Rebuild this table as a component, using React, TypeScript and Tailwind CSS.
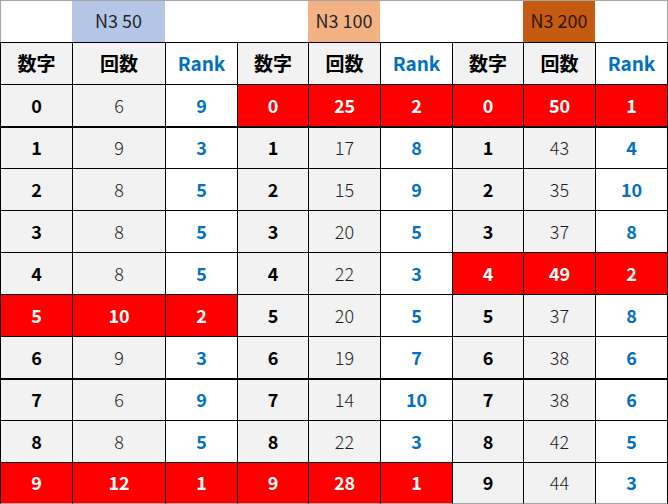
import React from 'react';

type Group = {
  label: string;
  labelClass: string;
  counts: number[];
  ranks: number[];
  red: number[];
};

const groups: Group[] = [
  {
    label: 'N3 50',
    labelClass: 'bg-[#b4c7e7] text-[#262626]',
    counts: [6, 9, 8, 8, 8, 10, 9, 6, 8, 12],
    ranks: [9, 3, 5, 5, 5, 2, 3, 9, 5, 1],
    red: [5, 9],
  },
  {
    label: 'N3 100',
    labelClass: 'bg-[#f4b183] text-[#262626]',
    counts: [25, 17, 15, 20, 22, 20, 19, 14, 22, 28],
    ranks: [2, 8, 9, 5, 3, 5, 7, 10, 3, 1],
    red: [0, 9],
  },
  {
    label: 'N3 200',
    labelClass: 'bg-[#c55a11] text-[#2e1404]',
    counts: [50, 43, 35, 37, 49, 37, 38, 38, 42, 44],
    ranks: [1, 4, 10, 8, 2, 8, 6, 6, 5, 3],
    red: [0, 4],
  },
];

const font = { fontFamily: '"Noto Sans CJK JP", "Noto Sans", sans-serif' };

const Cell = ({
  children,
  className = '',
  thick = false,
}: {
  children?: React.ReactNode;
  className?: string;
  thick?: boolean;
}) => (
  <div
    className={`h-[42px] pb-[2px] flex items-center justify-center border-l border-black leading-none ${
      thick ? 'border-t-2' : 'border-t'
    } ${className}`}
  >
    {children}
  </div>
);

export default function App() {
  const rows = Array.from({ length: 10 }, (_, i) => i);

  return (
    <div className="w-[668px] h-[504px] bg-white overflow-hidden" style={font}>
      <div className="grid grid-cols-[72px_93px_72px_71px_72px_72px_71px_72px_73px] border-t border-[#a6a6a6]">
        {/* Title row */}
        {groups.map((g, gi) => (
          <React.Fragment key={g.label}>
            <div className={`h-[41px] ${gi === 0 ? 'border-l border-[#a6a6a6]' : ''}`} />
            <div className={`h-[41px] pb-[2px] flex items-center justify-center text-[18px] ${g.labelClass}`}>
              {g.label}
            </div>
            <div className={`h-[41px] ${gi === 2 ? 'border-r border-[#a6a6a6]' : ''}`} />
          </React.Fragment>
        ))}

        {/* Column headers */}
        {groups.map((g, gi) => (
          <React.Fragment key={`h-${g.label}`}>
            <Cell className="bg-[#f2f2f2] font-bold text-black text-[19px]">数字</Cell>
            <Cell className="bg-[#f2f2f2] font-bold text-black text-[19px]">回数</Cell>
            <Cell className={`bg-white font-bold text-[#0070c0] text-[19px] ${gi === 2 ? 'border-r' : ''}`}>
              Rank
            </Cell>
          </React.Fragment>
        ))}

        {/* Data rows */}
        {rows.map((r) =>
          groups.map((g, gi) => {
            const red = g.red.includes(r);
            const thick = r === 1 || r === 7;
            const last = gi === 2;
            const bottom = r === 9 ? 'border-b border-b-[#a6a6a6]' : '';
            if (red) {
              return (
                <React.Fragment key={`${r}-${gi}`}>
                  <Cell thick={thick} className={`bg-[#ff0000] border-[#ff0000] text-white font-bold text-[18px] ${bottom}`}>
                    {r}
                  </Cell>
                  <Cell thick={thick} className={`bg-[#ff0000] border-[#ff0000] text-white font-bold text-[18px] ${bottom}`}>
                    {g.counts[r]}
                  </Cell>
                  <Cell
                    thick={thick}
                    className={`bg-[#ff0000] border-[#ff0000] text-white font-bold text-[18px] ${last ? 'border-r' : ''} ${bottom}`}
                  >
                    {g.ranks[r]}
                  </Cell>
                </React.Fragment>
              );
            }
            return (
              <React.Fragment key={`${r}-${gi}`}>
                <Cell thick={thick} className={`bg-[#f2f2f2] font-bold text-black text-[18px] ${bottom}`}>
                  {r}
                </Cell>
                <Cell thick={thick} className={`bg-[#f2f2f2] text-[#1f1f1f] font-light text-[18px] ${bottom}`}>
                  {g.counts[r]}
                </Cell>
                <Cell
                  thick={thick}
                  className={`bg-white font-bold text-[#0070c0] text-[18px] ${last ? 'border-r' : ''} ${bottom}`}
                >
                  {g.ranks[r]}
                </Cell>
              </React.Fragment>
            );
          })
        )}
      </div>
    </div>
  );
}
